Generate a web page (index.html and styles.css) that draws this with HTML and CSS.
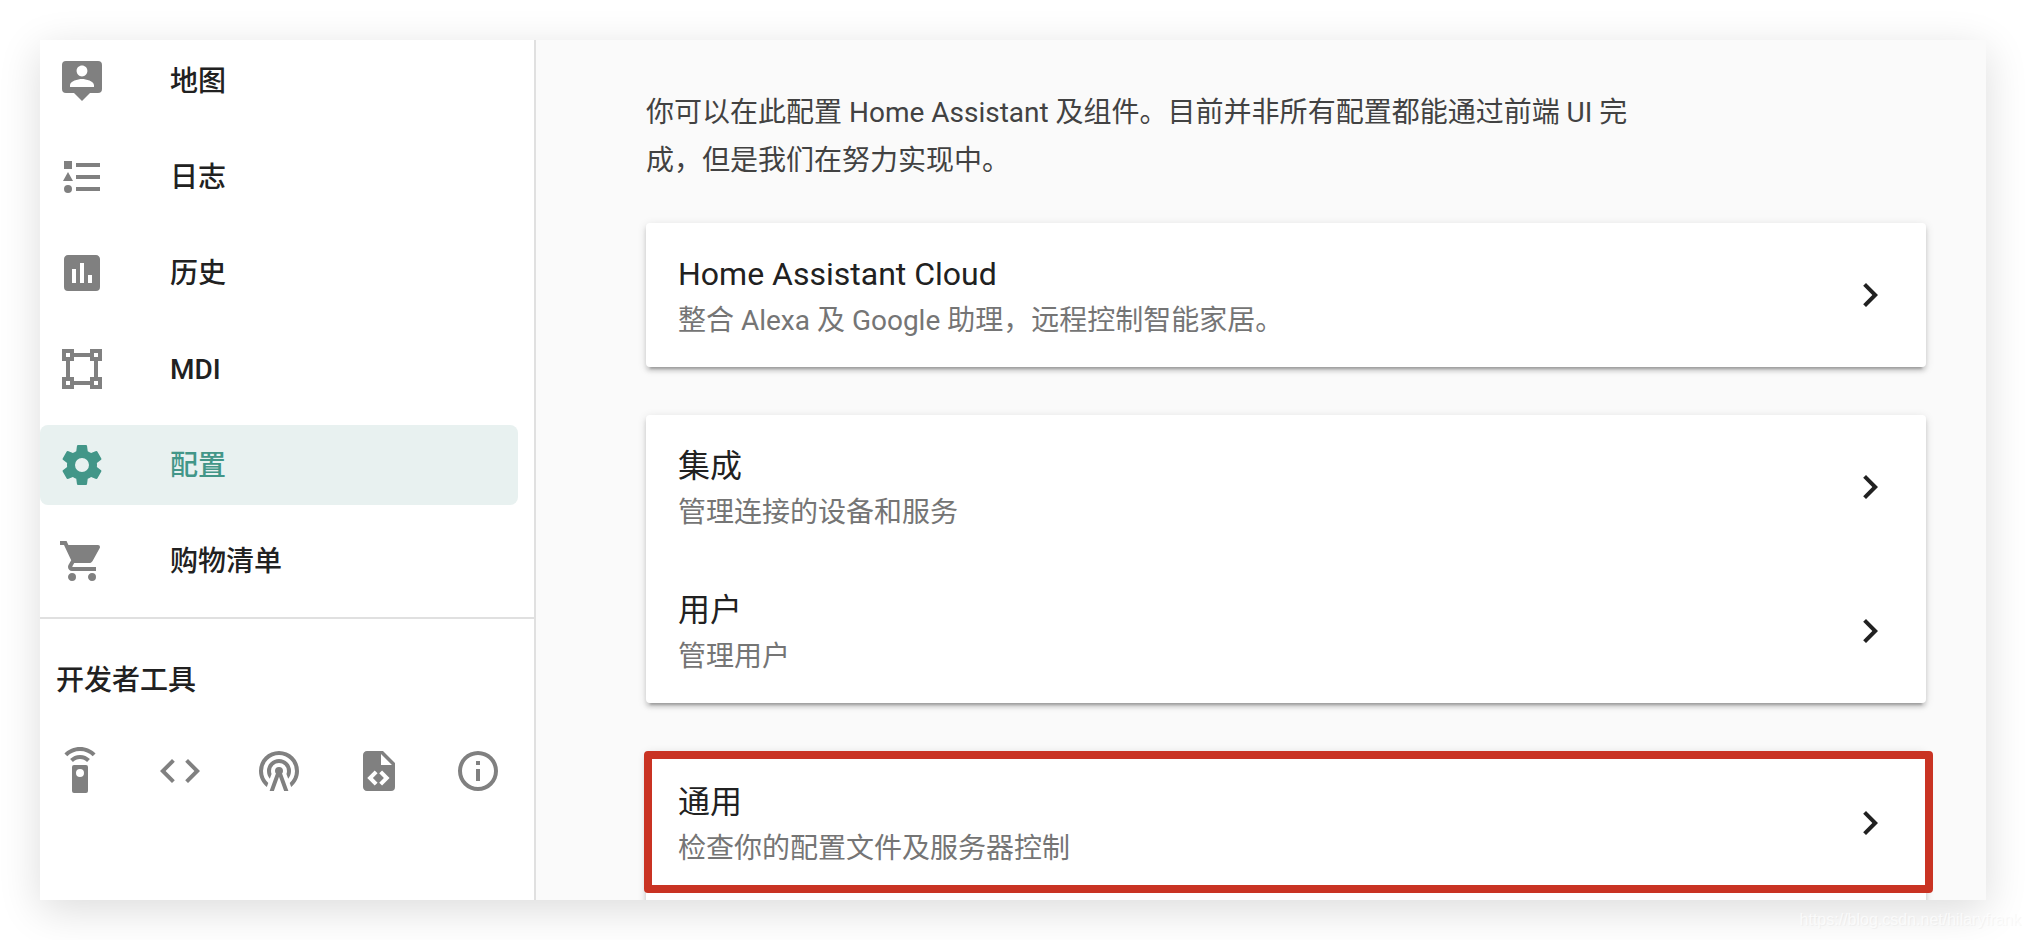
FILE: index.html
```
<!DOCTYPE html>
<html lang="zh-CN">
<head>
  <meta charset="utf-8">
  <title>Home Assistant</title>
  <link rel="stylesheet" href="styles.css">
</head>
<body>
  <div class="window">
    <aside class="sidebar">
      <nav class="menu">
        <a class="menu-item" href="#map">
          <svg class="icon" viewBox="0 0 24 24"><path d="M20,2H4A2,2 0 0,0 2,4V16A2,2 0 0,0 4,18H8L12,22L16,18H20A2,2 0 0,0 22,16V4A2,2 0 0,0 20,2M12,4.3C13.5,4.3 14.7,5.5 14.7,7C14.7,8.5 13.5,9.7 12,9.7C10.5,9.7 9.3,8.5 9.3,7C9.3,5.5 10.5,4.3 12,4.3M18,15H6V14.1C6,12.1 10,11 12,11C14,11 18,12.1 18,14.1V15Z"/></svg>
          <span>地图</span>
        </a>
        <a class="menu-item" href="#logbook">
          <svg class="icon" viewBox="0 0 24 24"><path d="M5,9.5L7.5,14H2.5L5,9.5M3,4H7V8H3V4M5,20A2,2 0 0,0 7,18A2,2 0 0,0 5,16A2,2 0 0,0 3,18A2,2 0 0,0 5,20M9,5V7H21V5H9M9,19H21V17H9V19M9,13H21V11H9V13Z"/></svg>
          <span>日志</span>
        </a>
        <a class="menu-item" href="#history">
          <svg class="icon" viewBox="0 0 24 24"><path d="M17,17H15V13H17M13,17H11V7H13M9,17H7V10H9M19,3H5C3.9,3 3,3.9 3,5V19A2,2 0 0,0 5,21H19A2,2 0 0,0 21,19V5C21,3.9 20.1,3 19,3Z"/></svg>
          <span>历史</span>
        </a>
        <a class="menu-item" href="#mdi">
          <svg class="icon" viewBox="0 0 24 24"><path d="M2,2H8V4H16V2H22V8H20V16H22V22H16V20H8V22H2V16H4V8H2V2M16,8V6H8V8H6V16H8V18H16V16H18V8H16M4,4V6H6V4H4M18,4V6H20V4H18M4,18V20H6V18H4M18,18V20H20V18H18Z"/></svg>
          <span>MDI</span>
        </a>
        <a class="menu-item active" href="#config">
          <svg class="icon" viewBox="0 0 24 24"><path d="M12,15.5A3.5,3.5 0 0,1 8.5,12A3.5,3.5 0 0,1 12,8.5A3.5,3.5 0 0,1 15.5,12A3.5,3.5 0 0,1 12,15.5M19.43,12.97C19.47,12.65 19.5,12.33 19.5,12C19.5,11.67 19.47,11.34 19.43,11L21.54,9.37C21.73,9.22 21.78,8.95 21.66,8.73L19.66,5.27C19.54,5.05 19.27,4.96 19.05,5.05L16.56,6.05C16.04,5.66 15.5,5.32 14.87,5.07L14.5,2.42C14.46,2.18 14.25,2 14,2H10C9.75,2 9.54,2.18 9.5,2.42L9.13,5.07C8.5,5.32 7.96,5.66 7.44,6.05L4.95,5.05C4.73,4.96 4.46,5.05 4.34,5.27L2.34,8.73C2.21,8.95 2.27,9.22 2.46,9.37L4.57,11C4.53,11.34 4.5,11.67 4.5,12C4.5,12.33 4.53,12.65 4.57,12.97L2.46,14.63C2.27,14.78 2.21,15.05 2.34,15.27L4.34,18.73C4.46,18.95 4.73,19.03 4.95,18.95L7.44,17.94C7.96,18.34 8.5,18.68 9.13,18.93L9.5,21.58C9.54,21.82 9.75,22 10,22H14C14.25,22 14.46,21.82 14.5,21.58L14.87,18.93C15.5,18.67 16.04,18.34 16.56,17.94L19.05,18.95C19.27,19.03 19.54,18.95 19.66,18.73L21.66,15.27C21.78,15.05 21.73,14.78 21.54,14.63L19.43,12.97Z"/></svg>
          <span>配置</span>
        </a>
        <a class="menu-item" href="#shopping">
          <svg class="icon" viewBox="0 0 24 24"><path d="M17,18A2,2 0 0,1 19,20A2,2 0 0,1 17,22C15.89,22 15,21.1 15,20C15,18.89 15.89,18 17,18M1,2H4.27L5.21,4H20A1,1 0 0,1 21,5C21,5.17 20.95,5.34 20.88,5.5L17.3,11.97C16.96,12.58 16.3,13 15.55,13H8.1L7.2,14.63L7.17,14.75A0.25,0.25 0 0,0 7.42,15H19V17H7C5.89,17 5,16.1 5,15C5,14.65 5.09,14.32 5.24,14.04L6.6,11.59L3,4H1V2M7,18A2,2 0 0,1 9,20A2,2 0 0,1 7,22C5.89,22 5,21.1 5,20C5,18.89 5.89,18 7,18Z"/></svg>
          <span>购物清单</span>
        </a>
      </nav>
      <div class="dev-tools">
        <h2>开发者工具</h2>
        <div class="dev-buttons">
          <button type="button" aria-label="服务">
            <svg class="icon" viewBox="0 0 24 24"><path d="M15,9H9A1,1 0 0,0 8,10V22A1,1 0 0,0 9,23H15A1,1 0 0,0 16,22V10A1,1 0 0,0 15,9M12,15A2,2 0 0,1 10,13A2,2 0 0,1 12,11A2,2 0 0,1 14,13A2,2 0 0,1 12,15M7.05,6.05L8.46,7.46C9.37,6.56 10.62,6 12,6C13.38,6 14.63,6.56 15.54,7.46L16.95,6.05C15.68,4.78 13.93,4 12,4C10.07,4 8.32,4.78 7.05,6.05M12,0C8.96,0 6.21,1.23 4.22,3.22L5.63,4.63C7.26,3 9.5,2 12,2C14.5,2 16.74,3 18.36,4.64L19.77,3.23C17.79,1.23 15.04,0 12,0Z"/></svg>
          </button>
          <button type="button" aria-label="状态">
            <svg class="icon" viewBox="0 0 24 24"><path d="M14.6,16.6L19.2,12L14.6,7.4L16,6L22,12L16,18L14.6,16.6M9.4,16.6L4.8,12L9.4,7.4L8,6L2,12L8,18L9.4,16.6Z"/></svg>
          </button>
          <button type="button" aria-label="事件">
            <svg class="icon" viewBox="0 0 24 24"><path d="M12,10A2,2 0 0,1 14,12C14,12.5 13.82,12.94 13.53,13.29L16.7,22H14.57L12,14.93L9.43,22H7.3L10.47,13.29C10.18,12.94 10,12.5 10,12A2,2 0 0,1 12,10M12,8A4,4 0 0,0 8,12C8,12.5 8.1,13 8.28,13.46L7.4,15.86C6.53,14.81 6,13.47 6,12A6,6 0 0,1 12,6A6,6 0 0,1 18,12C18,13.47 17.47,14.81 16.6,15.86L15.72,13.46C15.9,13 16,12.5 16,12A4,4 0 0,0 12,8M12,4A8,8 0 0,0 4,12C4,14.36 5,16.5 6.64,17.94L5.92,19.94C3.54,18.11 2,15.23 2,12A10,10 0 0,1 12,2A10,10 0 0,1 22,12C22,15.23 20.46,18.11 18.08,19.94L17.36,17.94C19,16.5 20,14.36 20,12A8,8 0 0,0 12,4Z"/></svg>
          </button>
          <button type="button" aria-label="模板">
            <svg class="icon" viewBox="0 0 24 24"><path d="M13,9H18.5L13,3.5V9M6,2H14L20,8V20A2,2 0 0,1 18,22H6C4.89,22 4,21.1 4,20V4C4,2.89 4.89,2 6,2M6.12,15.5L9.86,19.24L11.28,17.83L8.95,15.5L11.28,13.17L9.86,11.76L6.12,15.5M17.28,15.5L13.54,11.76L12.12,13.17L14.45,15.5L12.12,17.83L13.54,19.24L17.28,15.5Z"/></svg>
          </button>
          <button type="button" aria-label="关于">
            <svg class="icon" viewBox="0 0 24 24"><path d="M11,9H13V7H11M12,20C7.59,20 4,16.41 4,12C4,7.59 7.59,4 12,4C16.41,4 20,7.59 20,12C20,16.41 16.41,20 12,20M12,2A10,10 0 0,0 2,12A10,10 0 0,0 12,22A10,10 0 0,0 22,12A10,10 0 0,0 12,2M11,17H13V11H11V17Z"/></svg>
          </button>
        </div>
      </div>
    </aside>

    <main class="content">
      <p class="intro">你可以在此配置 Home Assistant 及组件。目前并非所有配置都能通过前端 UI 完成，但是我们在努力实现中。</p>

      <section class="card">
        <a class="card-row" href="#cloud">
          <div class="card-text">
            <div class="title">Home Assistant Cloud</div>
            <div class="desc">整合 Alexa 及 Google 助理，远程控制智能家居。</div>
          </div>
          <svg class="icon" viewBox="0 0 24 24"><path d="M8.59,16.58L13.17,12L8.59,7.41L10,6L16,12L10,18L8.59,16.58Z"/></svg>
        </a>
      </section>

      <section class="card">
        <a class="card-row" href="#integrations">
          <div class="card-text">
            <div class="title">集成</div>
            <div class="desc">管理连接的设备和服务</div>
          </div>
          <svg class="icon" viewBox="0 0 24 24"><path d="M8.59,16.58L13.17,12L8.59,7.41L10,6L16,12L10,18L8.59,16.58Z"/></svg>
        </a>
        <a class="card-row" href="#users">
          <div class="card-text">
            <div class="title">用户</div>
            <div class="desc">管理用户</div>
          </div>
          <svg class="icon" viewBox="0 0 24 24"><path d="M8.59,16.58L13.17,12L8.59,7.41L10,6L16,12L10,18L8.59,16.58Z"/></svg>
        </a>
      </section>

      <section class="card last">
        <a class="card-row" href="#core">
          <div class="card-text">
            <div class="title">通用</div>
            <div class="desc">检查你的配置文件及服务器控制</div>
          </div>
          <svg class="icon" viewBox="0 0 24 24"><path d="M8.59,16.58L13.17,12L8.59,7.41L10,6L16,12L10,18L8.59,16.58Z"/></svg>
        </a>
        <div class="highlight"></div>
      </section>
    </main>
  </div>
  <div class="watermark">https://blog.csdn.net/hilaryfrank</div>
</body>
</html>
```
FILE: styles.css
```
* {
  box-sizing: border-box;
}

body {
  margin: 0;
  padding: 40px;
  height: 100vh;
  overflow: hidden;
  background-color: #fff;
  font-family: Roboto, "Noto Sans CJK SC", sans-serif;
  font-size: 28px;
  color: #212121;
}

a {
  color: inherit;
  text-decoration: none;
}

.window {
  display: flex;
  height: 100%;
  overflow: hidden;
  background-color: #fafafa;
  box-shadow: 0 10px 40px rgba(0, 0, 0, 0.14);
}

.icon {
  display: block;
  flex: none;
  width: 48px;
  height: 48px;
  fill: currentColor;
}

/* Sidebar */
.sidebar {
  flex: none;
  width: 496px;
  background-color: #fff;
  border-right: 2px solid #e0e0e0;
}

.menu {
  display: flex;
  flex-direction: column;
  gap: 16px;
  padding: 1px 16px 16px 0;
  border-bottom: 2px solid #e0e0e0;
}

.menu-item {
  display: flex;
  align-items: center;
  gap: 64px;
  height: 80px;
  padding-left: 18px;
  border-radius: 8px;
  line-height: 40px;
  font-weight: 500;
}

.menu-item span {
  padding-top: 2px;
}

.menu-item .icon {
  color: #808080;
}

.menu-item.active,
.menu-item.active .icon {
  color: #429688;
}

.menu-item.active {
  background-color: #e8f1f0;
}

.dev-tools h2 {
  margin: 0;
  padding: 42px 16px 30px;
  font-size: 28px;
  line-height: 40px;
  font-weight: 500;
}

.dev-buttons {
  display: flex;
  justify-content: space-between;
  padding-right: 16px;
}

.dev-buttons button {
  padding: 16px;
  border: none;
  background: none;
  color: #808080;
  cursor: pointer;
}

/* Config page */
.content {
  flex: 1;
  padding: 49px 60px 0 110px;
}

.intro {
  max-width: 1000px;
  margin: 0 0 38px;
  line-height: 48px;
  color: #424242;
}

.card {
  position: relative;
  margin-bottom: 48px;
  background-color: #fff;
  border-radius: 4px;
  box-shadow: 0 4px 4px rgba(0, 0, 0, 0.14),
              0 2px 10px rgba(0, 0, 0, 0.12),
              0 6px 2px -4px rgba(0, 0, 0, 0.2);
}

.card.last {
  padding-bottom: 40px;
}

.card-row {
  display: flex;
  align-items: center;
  justify-content: space-between;
  height: 144px;
  padding: 0 32px;
}

.card-text {
  padding-top: 2px;
}

.title {
  font-size: 32px;
  line-height: 50px;
}

.desc {
  line-height: 44px;
  color: #757575;
}

/* red frame over the card */
.highlight {
  position: absolute;
  top: 0;
  left: -2px;
  right: -7px;
  height: 142px;
  border: 8px solid #c93323;
  border-radius: 4px;
}

.watermark {
  position: absolute;
  right: 5px;
  bottom: 8px;
  font-family: "Liberation Sans", Arial, sans-serif;
  font-size: 16px;
  line-height: 24px;
  color: rgba(255, 255, 255, 0.7);
  text-shadow: 1px 1px 1px rgba(0, 0, 0, 0.04);
}
```
